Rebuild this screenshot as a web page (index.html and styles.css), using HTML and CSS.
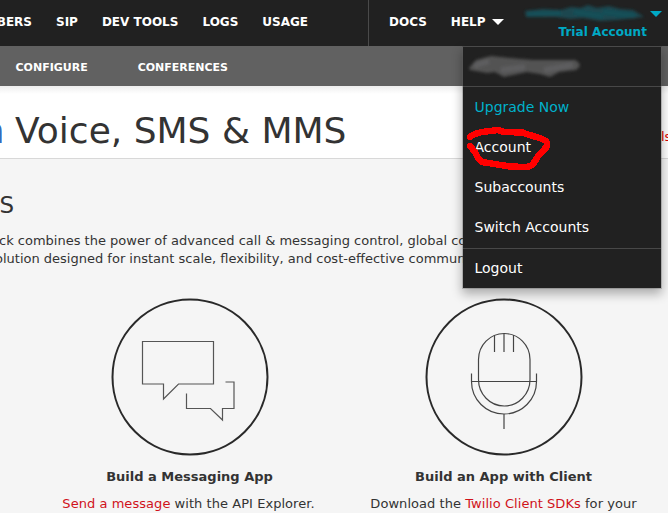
FILE: index.html
```html
<!DOCTYPE html>
<html lang="en">
<head>
<meta charset="utf-8">
<title>Programmable Voice, SMS &amp; MMS</title>
<link rel="stylesheet" href="styles.css">
</head>
<body>
<header class="topbar">
  <nav class="primary">
    <a class="clipped"><span>BERS</span></a>
    <a>SIP</a><a>DEV TOOLS</a><a>LOGS</a><a>USAGE</a>
  </nav>
  <div class="utility">
    <a>DOCS</a>
    <a class="help">HELP <svg width="12" height="6" viewBox="0 0 12 6"><path d="M0 0h12L6 6z" fill="#fff"/></svg></a>
  </div>
  <div class="account">
    <svg class="smudge" width="140" height="18" viewBox="0 0 140 18">
      <defs><filter id="soft" x="-10%" y="-30%" width="120%" height="160%"><feGaussianBlur stdDeviation="1.4"/></filter></defs>
      <g filter="url(#soft)"><path d="M-2 6L16 4L34 5L44 2L54 3L61 0L70 3L82 1L93 4L106 5L117 12L107 13L90 15L73 16L56 13L43 14L29 12L-1 12z" fill="#1a474f"/><path d="M0 9L34 8M47 7L76 11M76 7L108 11" fill="none" stroke="#185059" stroke-width="5"/></g>
    </svg>
    <svg class="caret" width="12" height="6" viewBox="0 0 12 6"><path d="M0 0h12L6 6z" fill="#00a9c5"/></svg>
    <span class="plan">Trial Account</span>
  </div>
</header>
<div class="menu">
  <div class="owner">
    <svg width="120" height="28" viewBox="0 0 120 28">
      <defs><filter id="soft2" x="-10%" y="-20%" width="120%" height="140%"><feGaussianBlur stdDeviation="1.5"/></filter></defs>
      <g filter="url(#soft2)"><path d="M4 16L11 8L26 4L45 6L68 8L110 8Q119 13 111 18L94 20L85 25L75 22L62 20L39 25L30 20L22 21L5 18z" fill="#525252"/><path d="M9 14L24 9M36 18L60 15M79 18L108 13" stroke="#5d5d5f" stroke-width="6" fill="none"/></g>
    </svg>
  </div>
  <a class="upgrade">Upgrade Now</a>
  <a>Account</a>
  <a>Subaccounts</a>
  <a>Switch Accounts</a>
  <a class="logout">Logout</a>
  <svg class="marker" width="90" height="50" viewBox="0 0 90 50"><path d="M9 14C12 11 16 10 21 9L37 7L43 9L62 9.500C68 13 85 15 86 20C87 25 81 28 77 33C73 40 71 44 65 44L49 43.500L21 39C16 36 16 32 14 29L9 23" fill="none" stroke="#f00" stroke-width="6.5" stroke-linecap="round" stroke-linejoin="round" shape-rendering="crispEdges"/></svg>
</div>
<nav class="subnav"><a>CONFIGURE</a><a>CONFERENCES</a></nav>
<section class="title">
  <h1><span class="lead"><span>n</span></span><span>Voice, SMS &amp; MMS</span></h1>
  <a class="side-link">ls</a>
</section>
<main>
  <h2>S</h2>
  <div class="intro">
    <p class="line-one">ck combines the power of advanced call &amp; messaging control, global co</p>
    <p class="line-two">olution designed for instant scale, flexibility, and cost-effective commun</p>
  </div>
  <div class="cards">
    <article>
      <svg width="158" height="158" viewBox="0 0 158 158" fill="none" stroke="#555" stroke-width="1.2">
        <circle cx="79" cy="79" r="77.5" stroke="#292929" stroke-width="2"/>
        <path d="M31.5 43.5H102.5V86H67.5L52.5 101V86H31.5Z"/>
        <path d="M114.5 84H123V110.5H111.5V122L99.5 110.5H75.5V95.5"/>
      </svg>
      <h3>Build a Messaging App</h3>
      <p><a>Send a message</a> with the API Explorer.</p>
    </article>
    <article>
      <svg width="158" height="158" viewBox="0 0 158 158" fill="none" stroke="#444" stroke-width="1.2">
        <circle cx="79" cy="79" r="77.5" stroke="#292929" stroke-width="2"/>
        <path d="M53.5 61.5A25.75 26 0 0 1 105 61.5V81.5A25.75 26.5 0 0 1 53.5 81.5Z"/>
        <path d="M46.5 75.5V83.5A32.5 32.5 0 0 0 111.5 83.5V75.5M46.5 83.5H111.5M69.5 37V54M79 35.5V54M88.5 37V54M79 116.5V131"/>
      </svg>
      <h3>Build an App with Client</h3>
      <p>Download the <a>Twilio Client SDKs</a> for your</p>
    </article>
  </div>
</main>
</body>
</html>
```
FILE: styles.css
```css
* { box-sizing: border-box; }
body {
  margin: 0;
  width: 668px;
  height: 513px;
  overflow: hidden;
  position: relative;
  background: #f5f5f5;
  color: #333;
  font: 13px/18px "DejaVu Sans", sans-serif;
}
h1, h2, h3, p { margin: 0; }
svg { display: block; }
.topbar {
  display: flex;
  height: 46px;
  background: #212121;
  color: #fff;
  font-size: 12px;
  font-weight: bold;
  line-height: 44px;
}
.primary {
  display: flex;
  gap: 24px;
  width: 369px;
  border-right: 1px solid #4a4a4a;
  white-space: nowrap;
}
.clipped {
  display: flex;
  justify-content: flex-end;
  width: 32px;
  overflow: hidden;
}
.utility { display: flex; gap: 24px; padding-left: 20px; width: 156px; }
.help { display: flex; align-items: center; gap: 6px; height: 44px; }
.account {
  display: grid;
  grid-template-columns: 122px 12px;
  grid-template-rows: 20px 24px;
  column-gap: 3px;
  color: #00a9c5;
}
.smudge { margin: 5px 0 0 2px; overflow: visible; width: 140px; }
.caret { margin-top: 11px; }
.plan { line-height: 24px; text-align: right; letter-spacing: .05px; }
.menu {
  position: absolute;
  z-index: 2;
  top: 46px;
  left: 462px;
  width: 200px;
  height: 243px;
  border: 1px solid rgba(95, 95, 95, .3);
  border-top-color: #4a4a4a;
  background: #212121;
  background-clip: padding-box;
  box-shadow: 0 5px 10px rgba(0, 0, 0, .3);
  color: #fff;
  font-size: 14px;
  line-height: 40px;
}
.menu a { display: block; padding-left: 11.5px; }
.owner { height: 40px; padding: 5px 0 0 2px; border-bottom: 1px solid #484848; }
.menu .upgrade { color: #00b1cb; }
.menu .logout { border-top: 1px solid #484848; margin-top: 1px; line-height: 38px; }
.marker { position: absolute; top: 76px; left: -2px; }
.subnav {
  display: flex;
  gap: 50px;
  height: 40px;
  padding-left: 15.5px;
  background: #616161;
  color: #fff;
  font-size: 11px;
  font-weight: bold;
  line-height: 43px;
}
.title {
  display: flex;
  justify-content: space-between;
  height: 73px;
  border-bottom: 1px solid #d8d8d8;
  background: linear-gradient(#eee, #fff 8px);
}
h1 {
  display: flex;
  gap: 13px;
  font-size: 36px;
  font-weight: normal;
  line-height: 89px;
  white-space: nowrap;
}
.lead {
  display: flex;
  justify-content: flex-end;
  width: 2px;
  overflow: hidden;
  color: #346bbd;
}
.lead span { margin-right: -2.5px; }
.side-link { width: 7px; color: #d00; line-height: 101px; white-space: nowrap; }
h2 {
  height: 73px;
  margin-left: -.5px;
  font-size: 23px;
  font-weight: normal;
  line-height: 92px;
}
.intro { overflow: hidden; white-space: nowrap; height: 66px; width: 465px; }
.line-one { margin-left: -1px; }
.line-two { margin-left: -5px; }
.cards {
  display: grid;
  grid-template-columns: 314px 314px;
  padding-left: 32.5px;
  text-align: center;
}
article svg { margin: 0 auto; }
article p { position: relative; left: -1px; letter-spacing: .05px; white-space: nowrap; }
article + article p { left: 0; }
h3 { margin: 12px 0 9px; font-size: 13px; line-height: 18px; }
article a { color: #d0121b; }
```
